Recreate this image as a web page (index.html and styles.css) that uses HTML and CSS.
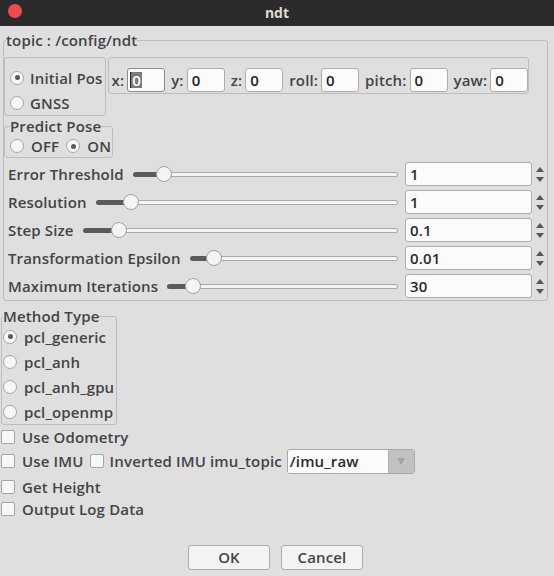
FILE: index.html
```html
<!DOCTYPE html>
<html>
<head>
<meta charset="utf-8">
<title>ndt</title>
<link rel="stylesheet" href="styles.css">
</head>
<body>
<div class="titlebar">
  <div class="tb-left"><span class="close"></span></div>
  <div class="title">ndt</div>
  <div class="tb-right"></div>
</div>
<div class="main">
  <fieldset class="group topic">
    <legend>topic : /config/ndt</legend>
    <div class="pose-row">
      <div class="box source">
        <div class="radio"><span class="rb checked"></span><span>Initial Pos</span></div>
        <div class="radio"><span class="rb"></span><span>GNSS</span></div>
      </div>
      <div class="box coords">
        <span class="clabel">x:</span><span class="field focus"><span class="caret"></span><span class="sel">0</span></span>
        <span class="clabel">y:</span><span class="field">0</span>
        <span class="clabel">z:</span><span class="field">0</span>
        <span class="clabel">roll:</span><span class="field">0</span>
        <span class="clabel">pitch:</span><span class="field">0</span>
        <span class="clabel">yaw:</span><span class="field last">0</span>
      </div>
    </div>
    <fieldset class="group predict">
      <legend>Predict Pose</legend>
      <div class="inline-radios">
        <div class="radio"><span class="rb"></span><span>OFF</span></div>
        <div class="radio"><span class="rb checked"></span><span>ON</span></div>
      </div>
    </fieldset>
    <div class="param">
      <span class="plabel">Error Threshold</span>
      <div class="slider"><div class="fill" style="width:27px"></div><span class="knob"></span><div class="rest"></div></div>
      <div class="spin">1</div>
      <div class="arrows"><span class="up"></span><span class="down"></span></div>
    </div>
    <div class="param">
      <span class="plabel">Resolution</span>
      <div class="slider"><div class="fill" style="width:31px"></div><span class="knob"></span><div class="rest"></div></div>
      <div class="spin">1</div>
      <div class="arrows"><span class="up"></span><span class="down"></span></div>
    </div>
    <div class="param">
      <span class="plabel">Step Size</span>
      <div class="slider"><div class="fill" style="width:32px"></div><span class="knob"></span><div class="rest"></div></div>
      <div class="spin">0.1</div>
      <div class="arrows"><span class="up"></span><span class="down"></span></div>
    </div>
    <div class="param">
      <span class="plabel">Transformation Epsilon</span>
      <div class="slider"><div class="fill" style="width:20px"></div><span class="knob"></span><div class="rest"></div></div>
      <div class="spin">0.01</div>
      <div class="arrows"><span class="up"></span><span class="down"></span></div>
    </div>
    <div class="param">
      <span class="plabel">Maximum Iterations</span>
      <div class="slider"><div class="fill" style="width:22px"></div><span class="knob"></span><div class="rest"></div></div>
      <div class="spin">30</div>
      <div class="arrows"><span class="up"></span><span class="down"></span></div>
    </div>
  </fieldset>

  <fieldset class="group method">
    <legend>Method Type</legend>
    <div class="radio mrow"><span class="rb checked"></span><span>pcl_generic</span></div>
    <div class="radio mrow"><span class="rb"></span><span>pcl_anh</span></div>
    <div class="radio mrow"><span class="rb"></span><span>pcl_anh_gpu</span></div>
    <div class="radio mrow"><span class="rb"></span><span>pcl_openmp</span></div>
  </fieldset>

  <div class="check-row first"><span class="cb"></span><span>Use Odometry</span></div>
  <div class="check-row imu">
    <span class="cb"></span><span>Use IMU</span>
    <span class="cb second"></span><span>Inverted IMU imu_topic</span>
    <div class="combo"><span class="combo-text">/imu_raw</span><span class="combo-btn"><span class="tri"></span></span></div>
  </div>
  <div class="check-row height"><span class="cb"></span><span>Get Height</span></div>
  <div class="check-row"><span class="cb"></span><span>Output Log Data</span></div>

  <div class="buttons">
    <div class="btn">OK</div>
    <div class="btn">Cancel</div>
  </div>
</div>
</body>
</html>
```
FILE: styles.css
```css
* { box-sizing: border-box; }
html, body { margin: 0; padding: 0; }
body {
  width: 554px;
  height: 576px;
  overflow: hidden;
  background: #dfdfdf;
  font-family: "Open Sans", "Noto Sans", "DejaVu Sans", sans-serif;
  font-size: 15px;
  font-weight: 600;
  letter-spacing: 0.15px;
  color: #444444;
}

.titlebar {
  height: 26px;
  background: #2b2b2b;
  display: grid;
  grid-template-columns: 1fr auto 1fr;
  align-items: center;
}
.tb-left { display: flex; align-items: center; }
.close {
  width: 14px;
  height: 14px;
  margin-left: 8px;
  margin-top: -4px;
  border-radius: 50%;
  background: #ef4a51;
}
.title {
  color: #dfdbd2;
  font-weight: 700;
  font-size: 14px;
  letter-spacing: 0;
  line-height: 26px;
  margin-top: -1px;
}

.main { padding: 0 6px 0 1px; }

.group {
  border: 1px solid #bdbdbd;
  border-radius: 3px;
  min-width: 0;
}
.group > legend {
  padding: 0;
  margin-left: 3px;
  line-height: 16px;
  height: 16px;
}

.topic {
  margin: 6px 0 0 2px;
  padding: 9px 0 2px 0;
}
.topic > legend { margin-left: 2px; }

.pose-row { display: flex; align-items: flex-start; gap: 2px; }
.box { border: 1px solid #bdbdbd; border-radius: 3px; }
.source {
  height: 59px;
  padding: 7px 2px 0 5px;
}
.radio {
  display: flex;
  align-items: center;
  height: 25px;
  white-space: nowrap;
}
.rb {
  width: 14px;
  height: 14px;
  border-radius: 50%;
  border: 1px solid #a6a6a6;
  background: #f7f7f7;
  margin-right: 6px;
  flex: none;
  display: flex;
  align-items: center;
  justify-content: center;
}
.rb.checked::after {
  content: "";
  width: 5px;
  height: 5px;
  border-radius: 50%;
  background: #5a5a5a;
}

.coords {
  height: 37px;
  display: flex;
  align-items: flex-end;
  padding: 0 0 1px 3px;
}
.clabel { line-height: 24px; margin-right: 3px; white-space: nowrap; }
.field {
  width: 38px;
  height: 24px;
  flex: none;
  border: 1px solid #adadad;
  border-radius: 3px;
  background: #fbfbfb;
  color: #222;
  padding-left: 4px;
  line-height: 22px;
  margin-right: 6px;
  display: flex;
  align-items: center;
}
.field.last { margin-right: 0; }
.field.focus { border-color: #8c8c8c; padding-left: 2px; }
.caret { width: 1px; height: 16px; background: #222; }
.sel {
  background: #7a7a7a;
  color: #fff;
  line-height: 16px;
  padding: 0 1px;
}

.predict {
  width: fit-content;
  margin: 2px 0 0 0;
  padding: 1px 1px 0 5px;
}
.predict > legend { margin-left: 0; }
.inline-radios { display: flex; gap: 7px; height: 22px; }
.inline-radios .radio { height: 22px; }
.inline-radios .rb { margin-right: 7px; }

.param {
  display: flex;
  align-items: center;
  height: 24px;
  margin-top: 4px;
  padding-left: 4px;
}
.plabel { white-space: nowrap; margin-right: 9px; }
.slider { flex: 1; display: flex; align-items: center; height: 16px; }
.fill {
  height: 5px;
  background: #5b5b5b;
  border-radius: 3px 0 0 3px;
  margin-right: -4px;
  flex: none;
}
.knob {
  width: 16px;
  height: 16px;
  border-radius: 50%;
  background: #f4f4f4;
  border: 1px solid #a2a2a2;
  position: relative;
  z-index: 1;
  flex: none;
}
.rest {
  flex: 1;
  height: 5px;
  border: 1px solid #a9a9a9;
  border-left: 0;
  background: #f4f4f4;
  border-radius: 0 3px 3px 0;
  margin-left: -4px;
}
.spin {
  width: 127px;
  height: 24px;
  margin-left: 7px;
  border: 1px solid #adadad;
  border-radius: 3px;
  background: #fbfbfb;
  color: #2a2a2a;
  padding-left: 4px;
  line-height: 22px;
  flex: none;
}
.arrows {
  width: 14px;
  flex: none;
  display: flex;
  flex-direction: column;
  align-items: center;
  gap: 5px;
  margin-left: 1px;
}
.up, .down {
  width: 0;
  height: 0;
  border-left: 4px solid transparent;
  border-right: 4px solid transparent;
}
.up { border-bottom: 5px solid #575757; }
.down { border-top: 5px solid #575757; }

.method {
  width: fit-content;
  margin: 7px 0 0 0;
  padding: 0 2px 0 1px;
}
.method > legend { margin-left: 0; }
.mrow .rb { margin-right: 7px; }

.check-row {
  display: flex;
  align-items: center;
  height: 22px;
  white-space: nowrap;
}
.check-row.first { margin-top: 1px; }
.check-row.imu { height: 26px; }
.check-row.height { margin-top: 2px; }
.cb {
  width: 14px;
  height: 14px;
  border: 1px solid #a6a6a6;
  border-radius: 2px;
  background: #f7f7f7;
  margin-right: 7px;
  flex: none;
}
.cb.second { margin-left: 6px; margin-right: 6px; }
.combo {
  width: 128px;
  height: 25px;
  margin-left: 5px;
  border: 1px solid #a9a9a9;
  border-radius: 3px;
  display: flex;
  overflow: hidden;
}
.combo-text {
  flex: 1;
  background: #fbfbfb;
  color: #2a2a2a;
  padding-left: 2px;
  line-height: 23px;
}
.combo-btn {
  width: 26px;
  background: #c1c1c1;
  border-left: 1px solid #b0b0b0;
  display: flex;
  align-items: center;
  justify-content: center;
}
.tri {
  width: 0;
  height: 0;
  border-left: 4px solid transparent;
  border-right: 4px solid transparent;
  border-top: 7px solid #a3a3a3;
}

.buttons {
  display: flex;
  justify-content: center;
  gap: 11px;
  margin-top: 25px;
  padding-left: 2px;
}
.btn {
  width: 82px;
  height: 25px;
  border: 1px solid #acacac;
  border-radius: 3px;
  background: #f3f3f3;
  text-align: center;
  line-height: 23px;
  color: #444;
}
```
